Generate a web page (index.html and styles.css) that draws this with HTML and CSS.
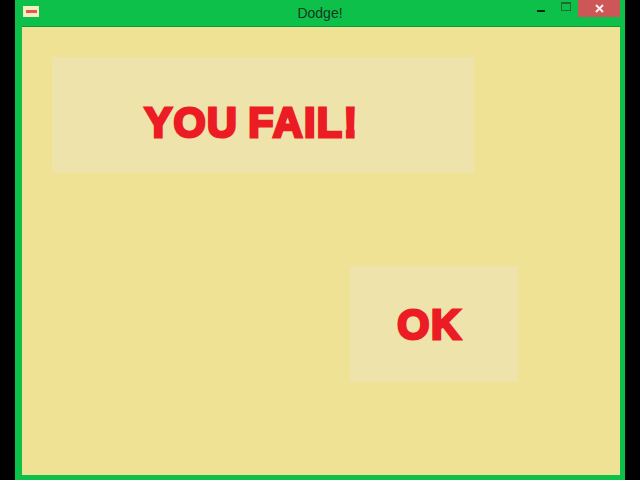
FILE: index.html
```html
<!DOCTYPE html>
<html lang="en">
<head>
    <meta charset="UTF-8">
    <meta name="viewport" content="width=device-width, initial-scale=1.0">
    <title>Dodge!</title>
    <link rel="stylesheet" href="styles.css">
</head>
<body>
    <div class="window">
        <header class="titlebar">
            <div class="app-icon"><span class="app-icon-bar"></span></div>
            <div class="title">Dodge!</div>
            <div class="controls">
                <div class="control minimize"><span class="minimize-bar"></span></div>
                <div class="control maximize"><span class="maximize-box"></span></div>
                <div class="control close">
                    <svg width="9" height="9" viewBox="0 0 9 9">
                        <path d="M1 1L8 8M8 1L1 8" stroke="#fbeeee" stroke-width="2" fill="none"/>
                    </svg>
                </div>
            </div>
        </header>
        <main class="client">
            <div class="panel message"><span class="panel-text">YOU FAIL!</span></div>
            <button class="panel ok-button"><span class="panel-text">OK</span></button>
        </main>
    </div>
</body>
</html>
```

FILE: styles.css
```css
html, body {
    margin: 0;
    padding: 0;
}
body {
    width: 640px;
    height: 480px;
    background-color: #000000;
    overflow: hidden;
}
.window {
    box-sizing: border-box;
    width: 610px;
    height: 480px;
    margin-left: 15px;
    padding: 0 5px 5px 7px;
    background-color: #0cc04a;
    display: flex;
    flex-direction: column;
}
.titlebar {
    height: 27px;
    flex: none;
    display: flex;
    position: relative;
}
.app-icon {
    width: 16px;
    height: 11px;
    margin: 6px 0 0 1px;
    background-color: #f5eec0;
    display: flex;
    align-items: center;
    justify-content: center;
}
.app-icon-bar {
    width: 11px;
    height: 3px;
    background-color: #e2584c;
}
.title {
    position: absolute;
    left: 0;
    right: 0;
    top: 5px;
    padding-right: 2px;
    text-align: center;
    font-family: "Liberation Sans", Arial, sans-serif;
    font-size: 14px;
    line-height: 16px;
    color: #15361f;
}
.controls {
    margin-left: auto;
    display: flex;
    align-items: flex-start;
}
.control {
    height: 17px;
    display: flex;
    align-items: center;
    justify-content: center;
}
.minimize {
    width: 26px;
}
.minimize-bar {
    width: 8px;
    height: 2px;
    margin-top: 4px;
    background-color: #0a2a12;
}
.maximize {
    width: 24px;
}
.maximize-box {
    box-sizing: border-box;
    width: 10px;
    height: 9px;
    margin-bottom: 4px;
    border: 1px solid #27663c;
    border-top-width: 2px;
}
.close {
    width: 42px;
    background-color: #cc5756;
}
.client {
    flex: 1;
    padding: 30px;
    background-color: #efe295;
    box-shadow: 0 -1px 0 #0a9a3c;
    display: flex;
    flex-direction: column;
    align-items: flex-start;
}
.panel {
    height: 116px;
    background-color: #efe3ac;
    color: #ec1c24;
    font-family: "Liberation Sans", Arial, sans-serif;
    font-weight: bold;
    font-size: 43px;
    letter-spacing: 1.5px;
    display: flex;
    align-items: center;
    justify-content: center;
}
.panel-text {
    -webkit-text-stroke: 3px #ec1c24;
    transform: scaleX(0.96);
}
.message {
    box-sizing: border-box;
    width: 422px;
    padding: 14px 22px 0 0;
    word-spacing: -3px;
}
.ok-button {
    width: 168px;
    margin: 93px 0 0 298px;
    border: none;
    padding: 0 9px 0 0;
}
```
